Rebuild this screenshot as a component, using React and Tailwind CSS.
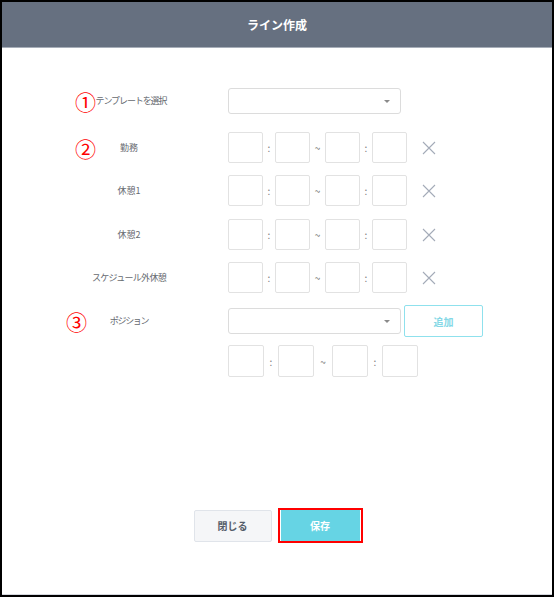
import React from 'react';

const jp = { fontFamily: '"Noto Sans CJK JP", "Noto Sans", sans-serif' };

// Red annotation marker placed over the label cell
const Marker = ({ n, className }) => (
  <span className={`absolute top-1/2 -translate-y-1/2 text-[21px] leading-none text-[#ff0000] ${className}`}>
    {n}
  </span>
);

const Label = ({ children, marker, markerPos, tight }) => (
  <div className="relative w-[138px] shrink-0 flex items-center justify-center text-[9px] text-[#666a70]">
    {marker && <Marker n={marker} className={markerPos} />}
    <span className={`relative ${tight || ''}`}>{children}</span>
  </div>
);

const Select = () => (
  <div className="w-[173px] h-[26px] rounded-[3px] border border-[#dcdcdc] bg-white flex items-center justify-end pr-[10px]">
    <span className="w-0 h-0 border-l-[3px] border-r-[3px] border-t-[3px] border-l-transparent border-r-transparent border-t-[#8a8a8a]" />
  </div>
);

const Box = ({ wide }) => (
  <div className={`${wide ? 'w-[36px] h-[32px]' : 'w-[35px] h-[31px]'} rounded-[2px] border border-[#e2e2e2] bg-white`} />
);

const Sep = ({ children, w }) => (
  <div className={`${w} flex items-center justify-center text-[10px] text-[#7a7a7a]`}>{children}</div>
);

const Close = () => (
  <svg width="14" height="14" viewBox="0 0 14 14" className="ml-[15px]">
    <path d="M1 1 L13 13 M13 1 L1 13" stroke="#a4abb8" strokeWidth="1.1" fill="none" />
  </svg>
);

const TimeRow = () => (
  <div className="flex items-center">
    <Box />
    <Sep w="w-[12px]">:</Sep>
    <Box />
    <Sep w="w-[15px]">~</Sep>
    <Box />
    <Sep w="w-[12px]">:</Sep>
    <Box />
    <Close />
  </div>
);

const Row = ({ label, marker, markerPos, tight, children, className }) => (
  <div className={`flex items-center ${className || ''}`}>
    <Label marker={marker} markerPos={markerPos} tight={tight}>{label}</Label>
    <div className="ml-[30px] flex items-center">{children}</div>
  </div>
);

export default function App() {
  return (
    <div className="w-[554px] h-[597px] border-2 border-black bg-white flex flex-col" style={jp}>
      {/* Header */}
      <div className="h-[46px] shrink-0 bg-[#667080] border-b border-[#a7aeb9] flex items-center justify-center">
        <span className="text-[12px] font-bold text-white">ライン作成</span>
      </div>

      {/* Form */}
      <div className="flex-1 flex flex-col pl-[58px] pt-[40px] border-b border-[#d5d8de]">
        <Row label="テンプレートを選択" marker="①" markerPos="left-[15px]" tight="tracking-[-1.1px] left-[2px]">
          <Select />
        </Row>

        <Row label="勤務" marker="②" markerPos="left-[15px]" className="mt-[18px]">
          <TimeRow />
        </Row>
        <Row label="休憩1" className="mt-[12px]">
          <TimeRow />
        </Row>
        <Row label="休憩2" className="mt-[13px]">
          <TimeRow />
        </Row>
        <Row label="スケジュール外休憩" tight="tracking-[-0.7px]" className="mt-[12px]">
          <TimeRow />
        </Row>

        <Row label="ポジション" marker="③" markerPos="left-[6px]" tight="tracking-[-1.3px]" className="mt-[12px]">
          <Select />
          <button className="ml-[3px] w-[79px] h-[32px] rounded-[2px] border border-[#8fe1ed] bg-white text-[10px] font-bold text-[#84d8e6]">
            追加
          </button>
        </Row>

        <div className="ml-[168px] mt-[8px] flex items-center">
          <Box wide />
          <Sep w="w-[14px]">:</Sep>
          <Box wide />
          <Sep w="w-[18px]">~</Sep>
          <Box wide />
          <Sep w="w-[14px]">:</Sep>
          <Box wide />
        </div>

        {/* Footer buttons */}
        <div className="-ml-[58px] mt-[131px] flex items-center justify-center gap-[6px] pl-[2px]">
          <button className="w-[78px] h-[32px] rounded-[2px] border border-[#e0e4ea] bg-[#f5f6f8] text-[10px] font-bold text-[#555d6a]">
            閉じる
          </button>
          <div className="w-[85px] h-[35px] border-2 border-[#ff0000] bg-white px-px">
            <button className="w-full h-full bg-[#66d4e4] text-[10px] font-bold text-white">保存</button>
          </div>
        </div>
      </div>
    </div>
  );
}
